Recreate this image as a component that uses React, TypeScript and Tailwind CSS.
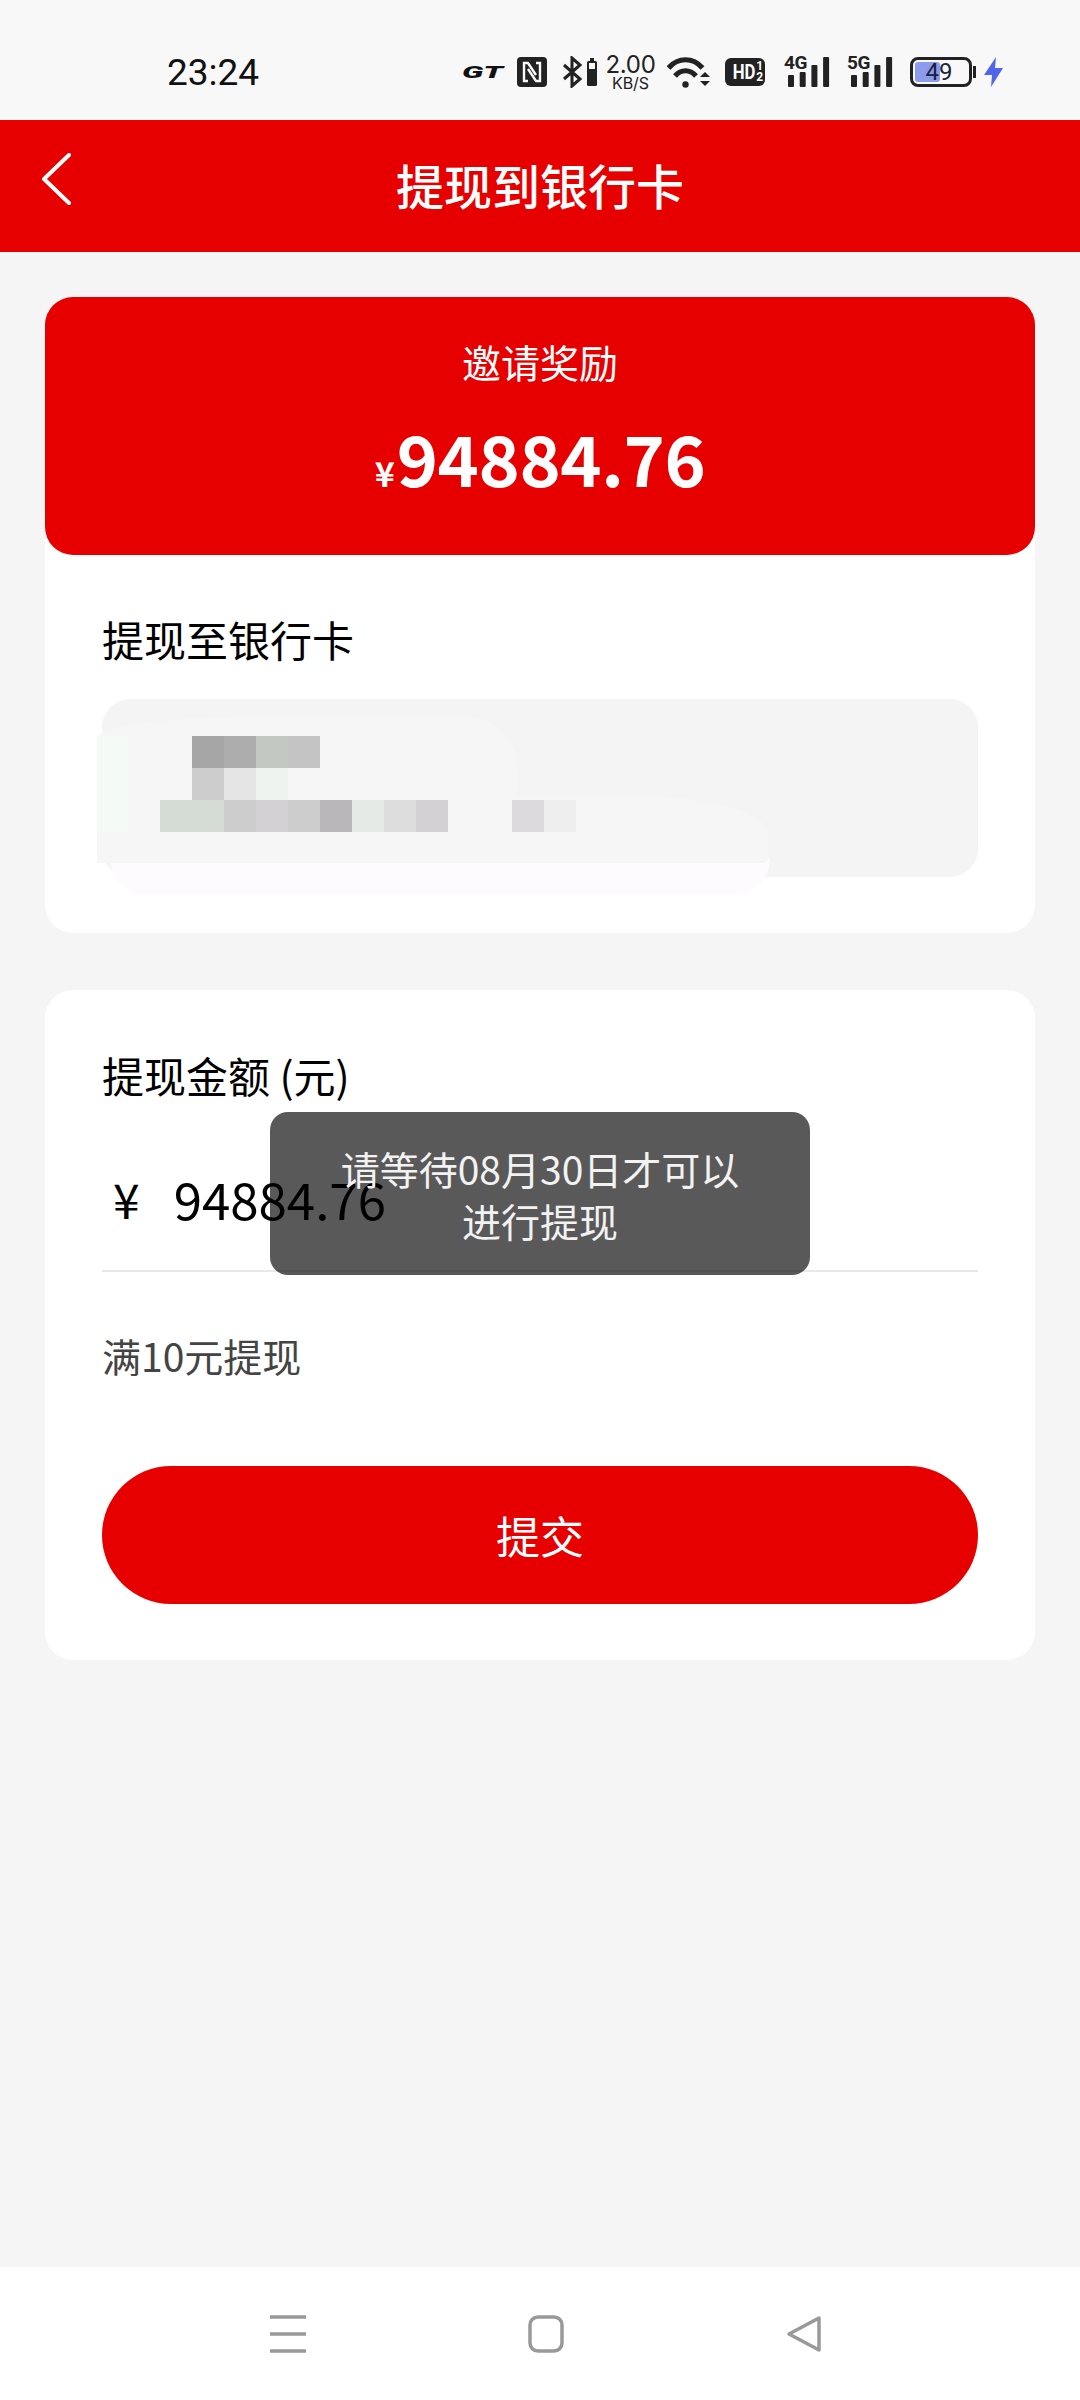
const MOSAIC_ROWS = [
  { pad: "pl-[192px]", cells: ["bg-[#a6a6a6]", "bg-[#adadad]", "bg-[#c3c8c2]", "bg-[#c4c4c4]"] },
  { pad: "pl-[192px]", cells: ["bg-[#cccccc]", "bg-[#e5e5e5]", "bg-[#eef2ee]"] },
  {
    pad: "pl-[160px]",
    cells: [
      "bg-[#d5dbd5]",
      "bg-[#d5dbd5]",
      "bg-[#cdcdcd]",
      "bg-[#d3d1d3]",
      "bg-[#cdcdcd]",
      "bg-[#b9b7b9]",
      "bg-[#e4e9e5]",
      "bg-[#dddddd]",
      "bg-[#d3d1d3]",
      "bg-transparent",
      "bg-transparent",
      "bg-[#dcdadc]",
      "bg-[#eeeeee]",
    ],
  },
];

function Signal({ label, heights }: { label: string; heights: number[] }) {
  return (
    <div className="relative w-[46px] h-[32px]">
      <svg width="46" height="32" viewBox="0 0 46 32" className="absolute left-0 top-0">
        {heights.map((h, i) => (
          <rect key={i} x={4 + i * 11.7} y={31 - h} width="6" height={h} rx="1" fill="#222" />
        ))}
      </svg>
      <span className="absolute left-0 -top-[3px] text-[19px] leading-[20px] font-bold text-[#222] font-['Roboto'] tracking-[-0.5px]">
        {label}
      </span>
    </div>
  );
}

function StatusBar() {
  return (
    <div className="h-[120px] shrink-0 bg-[#f8f8f8] flex items-center pl-[167px] pt-[24px]">
      <span className="w-[95px] text-[37px] leading-none text-[#111] font-['Roboto']">23:24</span>
      <div className="ml-[200px] flex items-center h-[32px] text-[#222]">
        <span className="w-[44px] text-[17px] leading-none font-black italic text-[#111] font-['Roboto'] scale-x-[1.9] origin-left">GT</span>
        <svg className="ml-[11px]" width="30" height="30" viewBox="0 0 30 30">
          <rect width="30" height="30" rx="4" fill="#222" />
          <path d="M11 24 L7 24 V6 H11 L19 18 M19 6 H23 V24 H19 L11 12" fill="none" stroke="#f8f8f8" strokeWidth="2.4" />
        </svg>
        <svg className="ml-[16px]" width="19" height="32" viewBox="0 0 19 32" fill="none" stroke="#222" strokeWidth="3">
          <path d="M1 9 L17 23 L9 30 V2 L17 9 L1 23" />
        </svg>
        <svg className="ml-[5px]" width="10" height="28" viewBox="0 0 10 28">
          <rect x="3" y="0" width="4" height="3" fill="#222" />
          <rect x="0" y="3" width="10" height="25" rx="1.5" fill="#222" />
          <rect x="2" y="5" width="6" height="6" fill="#f8f8f8" />
        </svg>
        <div className="ml-[9px] w-[49px] flex flex-col items-center font-['Inter'] text-[#222] pt-[1px]">
          <span className="text-[24px] leading-[20px] tracking-[-0.3px]">2.00</span>
          <span className="text-[16px] leading-[16px]">KB/S</span>
        </div>
        <svg className="ml-[12px]" width="43" height="33" viewBox="0 0 43 33" fill="none" stroke="#222" strokeWidth="5.2">
          <path d="M1.5 12 C11 1 26 1 35.5 12" />
          <path d="M8 20 C14 13 23 13 29 20" />
          <circle cx="18.5" cy="28.5" r="3.2" fill="#222" stroke="none" />
          <path d="M33 21 L38 16 L43 21 Z" fill="#222" stroke="none" />
          <path d="M33 25 L38 30 L43 25 Z" fill="#222" stroke="none" />
        </svg>
        <div className="ml-[15px] w-[40px] h-[28px] rounded-[6px] bg-[#222] text-white flex items-center justify-center font-['Roboto'] font-bold">
          <span className="text-[21px] leading-none scale-x-[0.8] origin-right">HD</span>
          <span className="flex flex-col text-[12px] leading-[11px] ml-[1px]">
            <span>1</span>
            <span>2</span>
          </span>
        </div>
        <div className="ml-[19px]">
          <Signal label="4G" heights={[12, 15, 22, 30]} />
        </div>
        <div className="ml-[17px]">
          <Signal label="5G" heights={[12, 15, 22, 30]} />
        </div>
        <div className="ml-[17px] relative w-[62px] h-[30px] rounded-[8px] border-[3px] border-[#222] flex items-center justify-center">
          <div className="absolute left-[2px] top-[2px] bottom-[2px] w-[25px] rounded-[3px] bg-[#8c9bec]" />
          <span className="relative -ml-[4px] text-[24px] leading-none text-[#1a2040] font-['Roboto']">49</span>
        </div>
        <div className="ml-[1px] w-[3px] h-[12px] bg-[#222]" />
        <svg className="ml-[8px]" width="19" height="30" viewBox="0 0 19 30">
          <path d="M12 0 L0 18 H8 L7 30 L19 11 H11 Z" fill="#4f66e8" />
        </svg>
      </div>
    </div>
  );
}

function Header() {
  return (
    <div className="h-[132px] shrink-0 bg-[#e60000] grid grid-cols-[1fr_auto_1fr] items-center">
      <svg className="ml-[41px] -mt-[14px]" width="32" height="52" viewBox="0 0 32 52" fill="none" stroke="#fff" strokeWidth="4" strokeLinecap="round" strokeLinejoin="round">
        <path d="M28 2 L3 26 L28 50" />
      </svg>
      <span className="pb-[5px] text-[48px] font-medium text-white leading-none">提现到银行卡</span>
      <span />
    </div>
  );
}

// the card number was smudged out and mosaicked in the screenshot
function CardBox() {
  return (
    <div className="relative mt-[31px] h-[178px] rounded-[28px] bg-[#f4f4f4]">
      <div className="absolute left-[8px] top-[160px] w-[660px] h-[36px] rounded-b-[40px] bg-[#fdfbfd]" />
      <div className="absolute -left-[5px] top-[18px] w-[420px] h-[146px] rounded-tl-[150px_22px] rounded-tr-[50px] bg-[#f6f6f6]" />
      <div className="absolute -left-[5px] top-[98px] w-[673px] h-[66px] rounded-tr-[120px_40px] rounded-br-[8px] bg-[#f6f6f6]" />
      <div className="absolute -left-[5px] top-[37px] w-[31px] h-[96px] bg-[#f4faf6]" />
      <div className="absolute -left-[102px] top-[37px] flex flex-col">
        {MOSAIC_ROWS.map((row, i) => (
          <div key={i} className={`flex ${row.pad}`}>
            {row.cells.map((cell, j) => (
              <div key={j} className={`w-[32px] h-[32px] ${cell}`} />
            ))}
          </div>
        ))}
      </div>
    </div>
  );
}

function NavBar() {
  return (
    <div className="h-[133px] shrink-0 bg-white flex items-center justify-center gap-[222px] pl-[12px]">
      <svg width="36" height="38" viewBox="0 0 36 38" stroke="#999" strokeWidth="3.5">
        <path d="M0 2 H36 M0 19 H36 M0 36 H36" />
      </svg>
      <svg width="36" height="38" viewBox="0 0 36 38" fill="none" stroke="#999" strokeWidth="3.5">
        <rect x="2" y="2" width="32" height="34" rx="8" />
      </svg>
      <svg width="36" height="38" viewBox="0 0 36 38" fill="none" stroke="#999" strokeWidth="3.5" strokeLinejoin="round">
        <path d="M33 3 L3 19 L33 35 Z" />
      </svg>
    </div>
  );
}

export default function App() {
  return (
    <div className="relative w-[1080px] h-[2400px] flex flex-col bg-[#f5f5f5] overflow-hidden font-['Noto_Sans_CJK_SC','Noto_Sans',sans-serif]">
      <StatusBar />
      <Header />

      <main className="flex-1 px-[45px] pt-[45px]">
        <section className="rounded-[28px] bg-white">
          <div className="h-[258px] rounded-[28px] bg-[#e60000] flex flex-col items-center pt-[39px] text-white">
            <span className="text-[39px] leading-[50px]">邀请奖励</span>
            <div className="mt-[36px] flex items-baseline font-bold leading-none">
              <span className="text-[34px]">¥</span>
              <span className="ml-[2px] text-[70px] tracking-[-0.4px]">94884.76</span>
            </div>
          </div>
          <div className="px-[57px] pt-[55px] pb-[56px]">
            <div className="text-[42px] leading-[58px] text-black">提现至银行卡</div>
            <CardBox />
          </div>
        </section>

        <section className="mt-[57px] rounded-[28px] bg-white px-[57px] pt-[56px] pb-[56px]">
          <div className="text-[42px] leading-[58px] text-black">提现金额 (元)</div>
          <div className="mt-[64px] h-[104px] pl-[11px] flex items-start border-b-2 border-[#e8e8e8] text-black">
            <span className="text-[48px] leading-[60px]">¥</span>
            <span className="ml-[34px] text-[51px] leading-[60px]">94884.76</span>
          </div>
          <div className="mt-[54px] text-[39px] leading-[58px] text-[#444]">满10元提现</div>
          <button className="mt-[82px] w-full h-[138px] rounded-full bg-[#e60000] text-white text-[44px]">提交</button>
        </section>
      </main>

      <NavBar />

      <div className="absolute left-[270px] top-[1112px] w-[540px] h-[163px] rounded-[18px] bg-black/65 flex flex-col items-center justify-center text-[39px] leading-[52px] text-[#f2f2f2]">
        <span>请等待08月30日才可以</span>
        <span>进行提现</span>
      </div>
    </div>
  );
}
